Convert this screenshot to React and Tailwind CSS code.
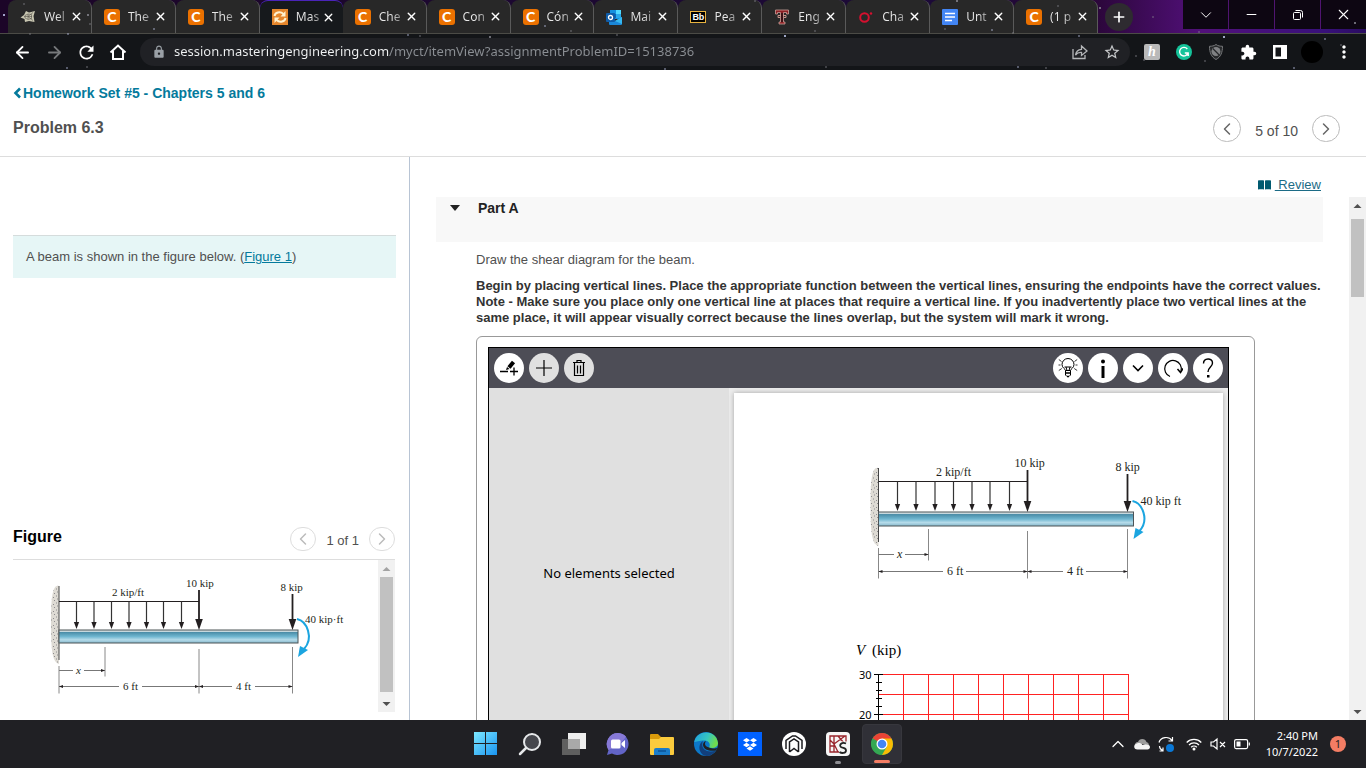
import React from 'react';
import { ArrowLeft, ArrowRight, X, Plus, Minus, ChevronDown, ChevronUp, ChevronLeft, ChevronRight } from 'lucide-react';
import { MdLock, MdRefresh, MdStarBorder, MdExtension, MdMoreVert } from 'react-icons/md';

const UI_FONT = "font-['Noto_Sans',sans-serif]";

/* ---------- favicons ---------- */

const CheggIcon = () => (
  <span className="flex h-4 w-4 flex-none items-center justify-center rounded-[3px] bg-[#eb7100] font-['Lato',sans-serif] text-[14px] leading-4 font-black text-white">C</span>
);

const WebIcon = () => (
  <svg className="h-4 w-4 flex-none" viewBox="0 0 16 16">
    <path d="M.5 8.500 4 6l2-4 3 1.500L15 2l-1.500 5 1 6L9 12l-4 1-.5-3z" fill="#c9c7b2" />
    <path d="M5 6.500l3-1.500 3.500.5v4L8 10.500 5 9zM8 5v5M4 7.500h8M8 7.500l5-4M8 7.500l5 4" stroke="#55534a" strokeWidth=".6" fill="none" />
  </svg>
);

const MasteringIcon = () => (
  <svg className="h-4 w-4 flex-none" viewBox="0 0 16 16">
    <rect width="16" height="16" fill="#e5862c" />
    <path d="M2.500 7C3 3.500 8 2 11.500 5M13.500 9C13 12.500 8 14 4.500 11" fill="none" stroke="#fff2cf" strokeWidth="2" />
    <path d="M13.500 2v5.500H8.500zM2.500 14V8.500h5z" fill="#fff2cf" />
  </svg>
);

const OutlookIcon = () => (
  <svg className="h-4 w-4 flex-none" viewBox="0 0 16 16">
    <path d="M4 1h11v9H4z" fill="#1490df" />
    <path d="M10 1h5v4h-5z" fill="#50d9ff" />
    <path d="M5 5h5v4H5z" fill="#0a64b5" />
    <path d="M10 5h5v4h-5z" fill="#28a8ea" />
    <path d="M3 8l6 4 7-4v7a1 1 0 0 1-1 1H4a1 1 0 0 1-1-1z" fill="#1a87d8" />
    <path d="M9 12l7-4v7z" fill="#35b8f1" />
    <rect y="4" width="9" height="9" rx="1" fill="#0f5ca8" />
    <circle cx="4.500" cy="8.500" r="2" fill="none" stroke="#fff" strokeWidth="1.300" />
  </svg>
);

const BlackboardIcon = () => (
  <span className="flex h-3 w-4 flex-none items-center justify-center border border-[#e8b33f] bg-black font-['Liberation_Sans',sans-serif] text-[9px] leading-3 font-bold text-white">Bb</span>
);

const TechIcon = () => (
  <svg className="h-4 w-4 flex-none" viewBox="0 0 16 16">
    <path d="M1.500 1h13v4h-2V3.500H9.500V13H11v2H5v-2h1.500V3.500h-3V5h-2z" fill="#8d1f24" stroke="#d8b0a8" strokeWidth=".7" />
    <path d="M4 6.500h8v2h-2M4 6.500v2h2" stroke="#c9958d" fill="none" />
    <path d="M7 4h2v9H7z" fill="#3c1216" />
  </svg>
);

const CharmIcon = () => (
  <svg className="h-4 w-4 flex-none" viewBox="0 0 16 16">
    <circle cx="6.500" cy="8.500" r="4.300" fill="none" stroke="#d5102f" strokeWidth="2" />
    <circle cx="13" cy="4.500" r="1.200" fill="#d5102f" />
  </svg>
);

const DocsIcon = () => (
  <svg className="h-4 w-4 flex-none" viewBox="0 0 16 16">
    <rect width="16" height="16" rx="1" fill="#4285f4" />
    <path d="M3 4.500h10M3 8h10M3 11.500h7" stroke="#fff" strokeWidth="1.600" />
  </svg>
);

const tabs = [
  { title: 'Wel', Icon: WebIcon },
  { title: 'The', Icon: CheggIcon },
  { title: 'The', Icon: CheggIcon },
  { title: 'Mas', Icon: MasteringIcon, active: true },
  { title: 'Che', Icon: CheggIcon },
  { title: 'Con', Icon: CheggIcon },
  { title: 'Cón', Icon: CheggIcon },
  { title: 'Mai', Icon: OutlookIcon },
  { title: 'Pea', Icon: BlackboardIcon },
  { title: 'Eng', Icon: TechIcon },
  { title: 'Cha', Icon: CharmIcon },
  { title: 'Unt', Icon: DocsIcon },
  { title: '(1 p', Icon: CheggIcon },
];

/* ---------- browser chrome ---------- */

const stars = [
  [4, 15], [24, 4], [90, 24], [154, 29], [148, 17], [88, 15], [67, 68], [87, 67], [420, 36], [408, 35], [490, 37],
  [571, 31], [545, 26], [617, 35], [755, 1], [785, 36], [815, 31], [826, 67], [665, 69], [945, 29], [957, 1], [992, 30],
  [1013, 33], [1058, 6], [1079, 36], [1100, 8], [1153, 17], [1018, 67], [1046, 68], [1144, 60], [1224, 37], [1199, 32],
  [1205, 61], [1325, 39], [1341, 45], [1355, 23], [1294, 68], [1136, 56], [30, 34], [68, 34],
];

const StarField = () => (
  <svg className="pointer-events-none absolute inset-0 h-full w-full" aria-hidden="true">
    {stars.map(([x, y], i) => (
      <circle key={i} cx={x} cy={y} r={i % 5 === 0 ? 1 : 0.7} fill={i % 3 === 0 ? '#cfd8ff' : '#8d8d96'} />
    ))}
  </svg>
);

const Tab = ({ title, Icon, active }) => (
  <li
    className={`flex h-full min-w-0 flex-1 items-center rounded-t-lg pr-2 pl-3 ${
      active ? 'border-t border-[#4a24b8] bg-[#16191c]' : 'border-r border-[#5a5a5a] bg-[#282828]'
    }`}
  >
    <Icon />
    <span className="ml-2 bg-[linear-gradient(90deg,#e8e8e8_60%,#8a8a8a)] bg-clip-text text-xs whitespace-nowrap text-transparent">{title}</span>
    <button className="ml-auto flex-none text-white" aria-label={`Close ${title}`}>
      <X size={13} strokeWidth={2.500} />
    </button>
  </li>
);

const WindowButton = ({ label, children }) => (
  <button aria-label={label} className="flex h-full flex-1 items-center justify-center bg-[#0d0612] text-white">{children}</button>
);

const ToolButton = ({ label, children, tone = 'text-white' }) => (
  <button aria-label={label} className={`flex h-8 w-8 flex-none items-center justify-center ${tone}`}>{children}</button>
);

const BrowserChrome = () => (
  <header className={`relative flex-none bg-[#131518] ${UI_FONT}`}>
    <div className="flex h-[34px] items-start border-b border-[#4b4b46] bg-[linear-gradient(90deg,#1c0528_0%,#1c0a38_70%,#2a0638_80%,#52107a_88%,#38107a_97%,#2a0c60_100%)] pl-2">
      <ul className="flex h-[33px] max-w-[1090px] flex-1">
        {tabs.map((tab, i) => (
          <Tab key={i} {...tab} />
        ))}
      </ul>
      <button aria-label="New tab" className="mt-[3px] ml-[7px] flex h-7 w-7 items-center justify-center rounded-full bg-[#2e2b30] text-white">
        <Plus size={16} strokeWidth={2.500} />
      </button>
      <div className="ml-auto flex h-[29px] w-[183px] gap-px bg-[#4f1470]">
        <WindowButton label="Search tabs"><ChevronDown size={18} strokeWidth={1.300} /></WindowButton>
        <WindowButton label="Minimize"><Minus size={15} strokeWidth={1.800} /></WindowButton>
        <WindowButton label="Restore">
          <svg width="12" height="12" viewBox="0 0 12 12" fill="none" stroke="currentColor">
            <rect x="1.500" y="3.500" width="7" height="7" rx="1" />
            <path d="M3.500 1.500h5a2 2 0 0 1 2 2v5" />
          </svg>
        </WindowButton>
        <WindowButton label="Close"><X size={17} strokeWidth={1.500} /></WindowButton>
      </div>
    </div>
    <div className="flex h-9 items-center px-1.5">
      <ToolButton label="Back"><ArrowLeft size={19} strokeWidth={2.300} /></ToolButton>
      <ToolButton label="Forward" tone="text-[#77797b]"><ArrowRight size={19} strokeWidth={2.300} /></ToolButton>
      <ToolButton label="Reload"><MdRefresh size={21} /></ToolButton>
      <ToolButton label="Home">
        <svg width="18" height="18" viewBox="0 0 18 18" fill="none" stroke="currentColor" strokeWidth="2">
          <path d="M1.500 9.500 9 2.500l7.500 7M4 8v8h10V8" />
        </svg>
      </ToolButton>
      <div className="ml-1.5 flex h-7 flex-1 items-center rounded-full bg-[#202125] pr-2.5 pl-3">
        <MdLock size={14} className="text-[#9aa0a6]" />
        <input
          aria-label="Address"
          defaultValue="session.masteringengineering.com/myct/itemView?assignmentProblemID=15138736"
          className="ml-2 min-w-0 flex-1 bg-[linear-gradient(90deg,#f1f3f4_215px,#8b8f94_215px)] bg-clip-text text-[13px] text-transparent outline-none"
        />
        <button aria-label="Share" className="flex w-8 justify-center text-[#b4b6b9]">
          <svg width="16" height="16" viewBox="0 0 16 16" fill="none" stroke="currentColor" strokeWidth="1.300">
            <path d="M1 5v9.500h12V11" />
            <path d="M3.500 11C4 7.500 6 5.500 9.500 5.300V2L15 7 9.500 11.500V8.500C7 8.300 5 9 3.500 11z" />
          </svg>
        </button>
        <button aria-label="Bookmark" className="-mr-2 flex w-8 justify-center text-[#c6c8ca]"><MdStarBorder size={18} /></button>
      </div>
      <div className="ml-1.5 flex">
        <ToolButton label="Honey">
          <span className="flex h-4 w-4 items-center justify-center rounded-xs bg-[#b9b9b9] font-['Liberation_Serif',serif] text-sm leading-4 font-bold text-white italic">h</span>
        </ToolButton>
        <ToolButton label="Grammarly">
          <svg width="16" height="16" viewBox="0 0 16 16">
            <circle cx="8" cy="8" r="8" fill="#15c39a" />
            <path d="M11.300 5A4.300 4.300 0 1 0 12 9H8.800M12.200 9v3" fill="none" stroke="#fff" strokeWidth="1.400" />
          </svg>
        </ToolButton>
        <ToolButton label="Ad shield">
          <svg width="16" height="16" viewBox="0 0 16 16">
            <path d="M8 .5c2 1.500 4 1.700 6.500 1.800C14.500 8 13 13 8 15.500 3 13 1.500 8 1.500 2.300 4 2.200 6 2 8 .5z" fill="#26282a" stroke="#77797b" />
            <circle cx="8" cy="7.500" r="4.500" fill="#808284" />
            <path d="M4.800 4.500l6.400 6.500" stroke="#26282a" strokeWidth="1.200" />
          </svg>
        </ToolButton>
        <ToolButton label="Extensions"><MdExtension size={17} /></ToolButton>
        <ToolButton label="Side panel">
          <svg width="14" height="14" viewBox="0 0 14 14">
            <path d="M0 0h14v14H0zM2.500 2.500v9H8v-9z" fill="#fff" fillRule="evenodd" />
          </svg>
        </ToolButton>
        <ToolButton label="Profile"><span className="h-[22px] w-[22px] rounded-full bg-black" /></ToolButton>
        <ToolButton label="Menu"><MdMoreVert size={20} /></ToolButton>
      </div>
    </div>
    <StarField />
  </header>
);

/* ---------- beam drawing ---------- */

// arrow head with its tip at x, y
const Head = ({ x, y, dir, len = 4, half = 1.5, fill = '#231f20' }) => {
  const points = {
    down: `${x},${y} ${x - half},${y - len} ${x + half},${y - len}`,
    left: `${x},${y} ${x + len},${y - half} ${x + len},${y + half}`,
    right: `${x},${y} ${x - len},${y - half} ${x - len},${y + half}`,
  };
  return <polygon points={points[dir]} fill={fill} />;
};

const Force = ({ x, top, tip }) => (
  <g>
    <path d={`M${x} ${top}V${tip - 8}`} stroke="#231f20" strokeWidth="1.800" />
    <Head x={x} y={tip} dir="down" len={11} half={3.8} />
  </g>
);

const Beam = ({ g, id }) => {
  const { wall, end, mid, tipLoad, top, beamH, loadY, loads, xMark, dimX, dimY, forceTop, lastTop } = g;
  const foot = dimY + 7;
  return (
    <g>
      <defs>
        <linearGradient id={`${id}-steel`} x1="0" y1="0" x2="0" y2="1">
          <stop offset="0" stopColor="#d5e3e8" />
          <stop offset=".13" stopColor="#c4d6dc" />
          <stop offset=".18" stopColor="#4b8da8" />
          <stop offset=".5" stopColor="#6fb6d0" />
          <stop offset=".75" stopColor="#b5dbe9" />
          <stop offset="1" stopColor="#86b8cc" />
        </linearGradient>
        <pattern id={`${id}-concrete`} width="6" height="7" patternUnits="userSpaceOnUse">
          <rect width="6" height="7" fill="#dedbd4" />
          <path d="M1 1h1M4 2.500h1M2 4h1M5 5.500h1" stroke="#8d8b8e" />
        </pattern>
      </defs>
      <path
        d={`M${wall} ${top - 44}C${wall - 6} ${top - 46} ${wall - 8} ${top - 34} ${wall - 8} ${top - 10}C${wall - 8} ${top + 20} ${wall - 7} ${top + 32} ${wall} ${top + 34}z`}
        fill={`url(#${id}-concrete)`}
      />
      <path d={`M${wall} ${top - 44}V${top + 30}`} stroke="#444" />
      <rect x={wall} y={top} width={end - wall} height={beamH} fill={`url(#${id}-steel)`} stroke="#4d5457" />
      <path d={`M${wall} ${loadY}H${mid}`} stroke="#231f20" />
      {loads.map((x) => (
        <g key={x}>
          <path d={`M${x} ${loadY}V${top - 4}`} stroke="#333" strokeWidth="1.200" />
          <Head x={x} y={top - 1} dir="down" len={7} half={2.6} />
        </g>
      ))}
      <Force x={mid} top={forceTop} tip={top} />
      <Force x={tipLoad} top={lastTop} tip={top} />
      <path
        d={`M${end - 1} ${top - 11}C${end + 9} ${top - 9} ${end + 16} ${top + 8} ${end + 6} ${top + 19}`}
        fill="none" stroke="#1ba5e0" strokeWidth="2"
      />
      <polygon points={`${end},${top + 27} ${end + 2},${top + 16} ${end + 10},${top + 20}`} fill="#1ba5e0" />
      <path
        d={`M${wall} ${top + 36}V${foot}M${xMark} ${top + 17}V${dimX + 6}M${mid} ${top + 19}V${foot}M${tipLoad} ${top + 17}V${foot}`}
        stroke="#888" fill="none"
      />
      <path
        d={`M${wall} ${dimX}H${g.xText - 3}M${g.xText + 8} ${dimX}H${xMark}M${wall} ${dimY}H${g.sixText - 4}M${g.sixText + 19} ${dimY}H${mid}M${mid} ${dimY}H${g.fourText - 4}M${g.fourText + 19} ${dimY}H${tipLoad}`}
        stroke="#777" fill="none"
      />
      <Head x={xMark} y={dimX} dir="right" />
      <Head x={wall} y={dimY} dir="left" />
      <Head x={mid} y={dimY} dir="right" />
      <Head x={mid} y={dimY} dir="left" />
      <Head x={tipLoad} y={dimY} dir="right" />
      <g className={`font-['Liberation_Serif',serif] ${g.textSize}`} fill="#231f20">
        <text x={mid - 13} y={forceTop - 3}>10 kip</text>
        <text x={tipLoad - 12} y={lastTop - 3}>8 kip</text>
        <text x={g.loadText} y={loadY - 6}>2 kip/ft</text>
        <text x={end + 7} y={top - 7}>{g.moment}</text>
        <text x={g.xText} y={dimX + 3} fontStyle="italic">x</text>
        <text x={g.sixText} y={dimY + 3}>6 ft</text>
        <text x={g.fourText} y={dimY + 3}>4 ft</text>
      </g>
    </g>
  );
};

const figureGeometry = {
  wall: 46, end: 285, mid: 186, tipLoad: 279.5, top: 70, beamH: 13, loadY: 41.5,
  loads: [63.5, 81, 98.5, 116, 133.5, 150.5, 168.5],
  xMark: 92, dimX: 110.5, dimY: 126.5, forceTop: 30, lastTop: 34,
  loadText: 99, xText: 63, sixText: 110, fourText: 223, moment: '40 kip·ft', textSize: 'text-[11px]',
};

const canvasGeometry = {
  wall: 144.5, end: 399.5, mid: 293.5, tipLoad: 393.5, top: 119, beamH: 14, loadY: 88.5,
  loads: [163.5, 182, 201, 219.5, 238, 256, 275.5],
  xMark: 194.5, dimX: 161.5, dimY: 178.5, forceTop: 77, lastTop: 81,
  loadText: 202, xText: 163, sixText: 213, fourText: 333, moment: '40 kip ft', textSize: 'text-[12px]',
};

const ShearGraph = () => {
  const columns = [169.5, 194.5, 219.5, 244.5, 269.5, 294.5, 319.5, 344.5, 369.5, 394.5];
  return (
    <g>
      <g className="font-['Liberation_Serif',serif] text-[15px]">
        <text x="122" y="262" fontStyle="italic">V</text>
        <text x="138" y="262">(kip)</text>
      </g>
      {[281.5, 301.5, 321.5].map((y) => (
        <path key={y} d={`M144 ${y}H395`} stroke="#f22" fill="none" />
      ))}
      {columns.map((x) => (
        <path key={x} d={`M${x} 281V340`} stroke="#f22" fill="none" />
      ))}
      <path d="M144.500 281V340M140 281.500h9M142 289.500h6M142 297.500h6M142 305.500h6M142 313.500h6M140 321.500h9" stroke="#000" />
      <g className="font-['Noto_Sans',sans-serif] text-[11px]">
        <text x="125" y="286">30</text>
        <text x="125" y="326">20</text>
      </g>
    </g>
  );
};

/* ---------- page ---------- */

const PagerButton = ({ label, muted, children }) => (
  <button
    aria-label={label}
    className={`flex items-center justify-center rounded-full border ${
      muted ? 'h-6 w-[26px] border-[#ddd] text-[#bbb]' : 'h-[27px] w-7 border-[#bbb] text-[#666]'
    }`}
  >
    {children}
  </button>
);

const Scrollbar = ({ thumb, faded }) => (
  <div className="flex w-[17px] flex-none flex-col items-center bg-[#f1f1f1]" aria-hidden="true">
    <svg className="h-[17px] w-[17px] flex-none" viewBox="0 0 17 17"><path d="M4.500 11h8l-4-4z" fill={faded ? '#a3a3a3' : '#505050'} /></svg>
    <div className={`w-[13px] bg-[#c1c1c1] ${thumb}`} />
    <svg className="mt-auto h-[17px] w-[17px] flex-none" viewBox="0 0 17 17"><path d="M4.500 7h8l-4 4z" fill="#505050" /></svg>
  </div>
);

const PageHeader = () => (
  <div className="flex flex-none items-end justify-between border-b border-[#ddd] pt-3.5 pr-[26px] pb-3.5 pl-[13px]">
    <div>
      <a href="#homework" className="flex items-center text-sm leading-[18px] font-bold text-[#047a9c]">
        <svg className="mr-0.5 h-3 w-2" viewBox="0 0 8 12" fill="none" stroke="currentColor" strokeWidth="2.600"><path d="M7 1.500 2.500 6 7 10.500" /></svg>
        Homework Set #5 - Chapters 5 and 6
      </a>
      <h1 className="mt-4 mb-1 text-base leading-5 font-bold text-[#505050]">Problem 6.3</h1>
    </div>
    <nav className="flex items-center gap-3.5">
      <PagerButton label="Previous item"><ChevronLeft size={20} strokeWidth={1.800} /></PagerButton>
      <span className="mt-1 text-sm leading-5 text-[#505050]">5 of 10</span>
      <PagerButton label="Next item"><ChevronRight size={20} strokeWidth={1.800} /></PagerButton>
    </nav>
  </div>
);

const LeftPane = () => (
  <aside className="flex w-[410px] flex-none flex-col border-r border-[#b8c4d4] pt-[78px] pb-2 pl-[13px]">
    <p className="mr-[13px] border-t border-[#d5dcdc] bg-[#e6f6f6] px-[13px] py-[13px] text-[13px] leading-4 text-[#505050]">
      A beam is shown in the figure below. (<a href="#figure" className="text-[#047a9c] underline">Figure 1</a>)
    </p>
    <section id="figure" className="mt-auto mr-3.5">
      <div className="flex items-center justify-between border-b border-[#ddd] pb-2">
        <h2 className="pb-1 text-base leading-5 font-bold text-black">Figure</h2>
        <div className="flex items-center gap-2.5">
          <PagerButton label="Previous figure" muted><ChevronLeft size={20} strokeWidth={1.800} /></PagerButton>
          <span className="pt-1 text-[13px] leading-5 text-[#505050]">1 of 1</span>
          <PagerButton label="Next figure" muted><ChevronRight size={20} strokeWidth={1.800} /></PagerButton>
        </div>
      </div>
      <div className="flex h-[152px]">
        <svg className="h-full min-w-0 flex-1" role="img" aria-label="Cantilever beam with loads">
          <Beam g={figureGeometry} id="figure" />
        </svg>
        <Scrollbar thumb="h-[115px]" faded />
      </div>
    </section>
  </aside>
);

const RoundButton = ({ label, disabled, children }) => (
  <button
    aria-label={label}
    disabled={disabled}
    className={`flex h-[30px] w-[30px] items-center justify-center rounded-full text-black ${disabled ? 'bg-[#e0e0e0]' : 'bg-white'}`}
  >
    <svg width="20" height="20" viewBox="0 0 20 20" fill="none" stroke="currentColor">{children}</svg>
  </button>
);

const DrawingTool = () => (
  <div className="flex min-h-[420px] flex-col border border-black">
    <div className="flex h-10 flex-none items-center justify-between bg-[#4d4d56] px-[5px]">
      <div className="flex gap-[5px]">
        <RoundButton label="Add line">
          <path d="M1 13.500h8M11 13.500h8M15 9.500v8" strokeWidth="1.300" />
          <path d="M10 9.500l4.500-5.500" strokeWidth="4" />
          <path d="M7 12l1-3 2.500 2z" fill="currentColor" stroke="none" />
        </RoundButton>
        <RoundButton label="Add element" disabled><path d="M10 2v16M2 10h16" strokeWidth="1.200" /></RoundButton>
        <RoundButton label="Delete" disabled>
          <path d="M4 4.500h12M8 4.500v-2h4v2M5.500 5v12.500h9V5M8.500 7.500v8M11.500 7.500v8" strokeWidth="1.200" />
        </RoundButton>
      </div>
      <div className="flex gap-[5px]">
        <RoundButton label="Hint">
          <path d="M7.500 12.500C7.500 11 4 10 4 6.500a6 6 0 0 1 12 0C16 10 12.500 11 12.500 12.500zM8 9l1 3.500M12 9l-1 3.500M6.500 9h7M7.500 12.500v4.500l1.500 1.500h2l1.500-1.500v-4.500" />
          <path d="M7.500 15h5M9 18.500h2" strokeWidth="1.500" />
          <path d="M.8 1.500 3.500 3.500M19.200 1.500 16.500 3.500M.8 12.500l3-2M19.200 12.500l-3-2M.5 7h2M17.500 7h2" strokeWidth=".8" />
        </RoundButton>
        <RoundButton label="Info">
          <path d="M10 8v12" strokeWidth="3" />
          <circle cx="10" cy="3.500" r="2" fill="currentColor" stroke="none" />
        </RoundButton>
        <RoundButton label="More"><path d="M5 7.500 10 12.500l5-5" strokeWidth="1.600" /></RoundButton>
        <RoundButton label="Reset">
          <path d="M7 18.500A8.300 8.300 0 1 1 18 13" strokeWidth="1.200" />
          <path d="M14.500 11l3 3.500 2.500-4" strokeWidth="1.500" />
        </RoundButton>
        <RoundButton label="Help">
          <path d="M5.500 5.500C5.500-.5 14.500-.5 14.500 5c0 4-4.500 4-4.500 9" strokeWidth="1.400" />
          <rect x="9" y="17" width="2.500" height="2.500" fill="currentColor" stroke="none" />
        </RoundButton>
      </div>
    </div>
    <div className="flex flex-1">
      <div className={`flex w-60 flex-none justify-center bg-[#e0e0e0] pt-[173px] text-[13px] leading-6 text-black ${UI_FONT}`}>No elements selected</div>
      <div className="flex flex-1 bg-[#ececec] pt-[5px] pr-[5px] pl-[5px]">
        <div className="flex-1 bg-white shadow-[0_0_5px_rgba(0,0,0,0.3)]">
          <svg className="h-[340px] w-full" role="img" aria-label="Shear diagram canvas">
            <Beam g={canvasGeometry} id="canvas" />
            <ShearGraph />
          </svg>
        </div>
      </div>
    </div>
  </div>
);

const RightPane = () => (
  <main className="flex min-w-0 flex-1 flex-col">
    <div className="flex h-10 flex-none items-end justify-end pr-[45px] pb-1">
      <a href="#review" className="flex items-center text-[13px] leading-4 text-[#1c6b86]">
        <svg className="mr-1 h-2.5 w-[13px]" viewBox="0 0 13 10">
          <path d="M0 .5C2 0 4.500 0 6 .5V9.500C4.500 9 2 9 0 9.500zM7 .5C8.500 0 11 0 13 .5v9c-2-.5-4.500-.5-6 0z" fill="#005a70" />
        </svg>
        <span className="whitespace-pre underline"> Review</span>
      </a>
    </div>
    <div className="flex min-h-0 flex-1">
      <div className="min-w-0 flex-1 overflow-hidden pr-[26px] pl-[26px]">
        <button className="flex h-[45px] w-full items-start gap-[18px] bg-[#f8f8f8] pt-[3px] pl-3.5 text-left text-sm leading-4 font-bold text-[#222]">
          <svg className="mt-1 h-2 w-2.5" viewBox="0 0 10 8"><path d="M0 1h10L5 7z" fill="#222" /></svg>
          <span>Part A</span>
        </button>
        <div className="pt-2.5 pl-10 text-[13px] leading-4 text-[#505050]">
          <p>Draw the shear diagram for the beam.</p>
          <p className="mt-2.5 font-bold text-[#333]">
            Begin by placing vertical lines. Place the appropriate function between the vertical lines, ensuring the endpoints have the correct values.
            <br />
            Note - Make sure you place only one vertical line at places that require a vertical line. If you inadvertently place two vertical lines at the same place, it will appear visually correct because the lines overlap, but the system will mark it wrong.
          </p>
          <div className="mt-2.5 mr-[68px] rounded-md border border-[#999] pt-2.5 pr-[25px] pl-[11px]">
            <DrawingTool />
          </div>
        </div>
      </div>
      <Scrollbar thumb="mt-[5px] h-[78px]" />
    </div>
  </main>
);

/* ---------- taskbar ---------- */

const apps = [
  {
    name: 'Start',
    art: (
      <g>
        <defs>
          <linearGradient id="win" gradientUnits="userSpaceOnUse" x1="0" y1="0" x2="24" y2="24"><stop stopColor="#7ce8ff" /><stop offset="1" stopColor="#1590f0" /></linearGradient>
        </defs>
        <path d="M0 0h11v11H0zM12 0h11v11H12zM0 12h11v11H0zM12 12h11v11H12z" fill="url(#win)" />
      </g>
    ),
  },
  {
    name: 'Search',
    art: (
      <g fill="none" stroke="#e6e8ea" strokeWidth="2" strokeLinecap="round">
        <circle cx="14" cy="10" r="8" fill="#45464c" />
        <path d="M8 16l-6 6" strokeWidth="2.500" />
      </g>
    ),
  },
  {
    name: 'Task view',
    art: (
      <g>
        <path d="M6 1h18v16H6z" fill="#eee" />
        <path d="M0 7h18v16H0z" fill="#5f5f5f" />
        <path d="M6 7h12v10H6z" fill="#a9a9a9" />
      </g>
    ),
  },
  {
    name: 'Chat',
    art: (
      <g>
        <path d="M12 1a11 11 0 1 1-6 20.500L1 23l1.500-5A11.200 11.200 0 0 1 12 1z" fill="#6264c7" />
        <path d="M12 1a11 11 0 0 0-9.500 17C8 16 17 10 20 4.500A11 11 0 0 0 12 1z" fill="#8779d6" />
        <rect x="5" y="7.500" width="9.500" height="9" rx="1.500" fill="#fff" />
        <path d="M15.500 11l3.500-3v8l-3.500-3z" fill="#fff" />
      </g>
    ),
  },
  {
    name: 'File Explorer',
    art: (
      <g>
        <path d="M0 3a1 1 0 0 1 1-1h7l3 3h9v5H0z" fill="#d99a0b" />
        <path d="M0 7h9l2-2h12a1 1 0 0 1 1 1v16a1 1 0 0 1-1 1H1a1 1 0 0 1-1-1z" fill="#fbcb3d" />
        <path d="M4 23v-5a2 2 0 0 1 2-2h12a2 2 0 0 1 2 2v5z" fill="#1a7cc9" />
        <path d="M8 19h8" stroke="#0b5294" strokeWidth="1.500" />
      </g>
    ),
  },
  {
    name: 'Edge',
    art: (
      <g>
        <defs>
          <linearGradient id="edge-top" x1="0" y1="0" x2="1" y2=".3"><stop stopColor="#1f9fe0" /><stop offset=".6" stopColor="#36c6c0" /><stop offset="1" stopColor="#6fdc4e" /></linearGradient>
        </defs>
        <circle cx="12" cy="12" r="12" fill="#0c78c9" />
        <path d="M.3 10C2-2 22-3.500 24 11c.3 4-4 6-9 4.500 2-3 0-7-4.500-7C5 8.500 2 10 .3 10z" fill="url(#edge-top)" />
        <path d="M9 9c-3 7 3 13 13 9.500C19 23 14 25 10 23.500 4 20 4 12 9 9z" fill="#123f7c" />
        <path d="M15 15.500c-4-1-5-3.500-3-6.500-4 1-4 6 0 8.500 3 1.500 7 1.500 10 1l1.500-2.500c-2 .8-6 .500-8.500-.5z" fill="#202124" />
      </g>
    ),
  },
  {
    name: 'Dropbox',
    art: (
      <g>
        <path d="M0 0h24v24H0z" fill="#0061fe" />
        <path d="M8.500 6l3.500 2.300-3.500 2.300L5 8.300zM15.500 6 19 8.300l-3.500 2.300L12 8.300zM8.500 10.700l3.500 2.300-3.500 2.300L5 13zM15.500 10.700 19 13l-3.500 2.300L12 13zM12 14.300l3.500 2.200-3.500 2.200-3.500-2.200z" fill="#fff" />
      </g>
    ),
  },
  {
    name: 'Bridge',
    art: (
      <g>
        <circle cx="12" cy="12" r="12" fill="#fff" />
        <path d="M4 17V8.500L10.500 4h3L20 8.500V17M7.500 20V10L12 7l4.500 3v10M7.500 20l4.500-3.500 4.500 3.500" fill="none" stroke="#1b1b1f" strokeWidth="1.500" />
      </g>
    ),
  },
  {
    name: 'Kinematics Solver',
    running: true,
    art: (
      <g fill="none">
        <rect width="24" height="24" rx="4" fill="#f6f6f6" />
        <path d="M4 4h16v16H4zM8 4v16M4 8l4 4M8 12l11-8M8 12l4 8M12 4l6 7M4 14h5" stroke="#98242b" strokeWidth="1.300" />
        <path d="M13 9.500h9V22h-9z" fill="#f6f6f6" />
        <path d="M20 11.500C16 9.500 12.500 13 15 15c2 1.500 5 .5 5 3.500S15.500 21.500 13.500 20" stroke="#222" strokeWidth="1.800" />
      </g>
    ),
  },
  {
    name: 'Chrome',
    active: true,
    art: (
      <g>
        <circle cx="12" cy="12" r="11" fill="#34a853" />
        <path d="M12 12 2.500 6.500a11 11 0 0 1 19 0z" fill="#ea4335" />
        <path d="M12 12V6.500h9.500A11 11 0 0 1 12 23z" fill="#fbbc04" />
        <path d="M12 12 2.500 6.500C-1 13 3 22.500 12 23l4.800-8.300z" fill="#34a853" />
        <circle cx="12" cy="12" r="5.500" fill="#fff" />
        <circle cx="12" cy="12" r="4.300" fill="#4285f4" />
      </g>
    ),
  },
];

const TaskButton = ({ app }) => (
  <button
    aria-label={app.name}
    className={`relative flex h-10 w-10 items-center justify-center rounded ${app.active ? 'border border-[#37373d] bg-[#303037]' : ''}`}
  >
    <svg width="24" height="24" viewBox="0 0 24 24">{app.art}</svg>
    {app.active && <span className="absolute bottom-0 h-[3px] w-4 rounded-full bg-[#f47d64]" />}
    {app.running && <span className="absolute bottom-0 h-[3px] w-1.5 rounded-full bg-[#8f8f94]" />}
  </button>
);

const Taskbar = () => (
  <footer className={`grid h-12 flex-none grid-cols-[1fr_auto_1fr] items-center bg-[#202024] text-white ${UI_FONT}`}>
    <div />
    <div className="flex gap-1 pl-0.5">
      {apps.map((app) => (
        <TaskButton key={app.name} app={app} />
      ))}
    </div>
    <div className="flex items-center justify-end pr-5">
      <button aria-label="Hidden icons" className="mr-1.5"><ChevronUp size={20} strokeWidth={1.500} /></button>
      <svg className="mr-2 h-4 w-4" viewBox="0 0 16 16">
        <path d="M4 6a4.500 4.500 0 0 1 8.500 0A3.500 3.500 0 0 1 15 9L8 8 1 11C0 8 2 6 4 6z" fill="#9c9c9c" />
        <path d="M3 7.500C5 6.500 7 7 8.500 9 11 7.500 16 8 16 11c0 1.500-1 2.500-2.500 2.500h-10C-.8 13.500-.8 8.500 3 7.500z" fill="#f4f4f4" />
      </svg>
      <svg className="mr-3 h-4 w-4" viewBox="0 0 16 16" fill="none" stroke="#fff" strokeWidth="1.200">
        <path d="M1 6.500C2.500.5 11 0 14 4.500M14.500 1v4H10.500M4.500 14.500C2.500 13.500 1.500 12 1.500 10M1.500 15h3.500v-3.500" />
        <circle cx="12" cy="12" r="4" fill="#0a78d6" stroke="none" />
      </svg>
      <svg className="mr-2 h-4 w-4" viewBox="0 0 16 16" fill="none" stroke="#fff" strokeWidth="1.300">
        <path d="M.7 6.500a10.300 10.300 0 0 1 14.600 0M3 9a7 7 0 0 1 10 0M5.200 11.300a4 4 0 0 1 5.600 0" />
        <circle cx="8" cy="13" r="1.500" fill="#fff" stroke="none" />
      </svg>
      <svg className="mr-2 h-4 w-4" viewBox="0 0 16 16" fill="none" stroke="#fff" strokeWidth="1.200">
        <path d="M1 6h2.500L7 3v10L3.500 10H1zM10 6l5 5M15 6l-5 5" />
      </svg>
      <svg className="mr-4 h-4 w-4" viewBox="0 0 16 16" fill="none" stroke="#fff" strokeWidth="1.200">
        <rect x=".6" y="3.600" width="13" height="9" rx="1.500" />
        <path d="M15.300 6.500v3" />
        <path d="M2.500 5.500h4v5h-4z" fill="#fff" stroke="none" />
      </svg>
      <div className="text-right text-[11px] leading-4">
        <div>2:40 PM</div>
        <div>10/7/2022</div>
      </div>
      <span className="ml-3 flex h-4 w-4 items-center justify-center rounded-full bg-[#f47d64] text-[11px] leading-4 text-[#222]">1</span>
    </div>
  </footer>
);

export default function App() {
  return (
    <div className="flex h-screen flex-col overflow-hidden bg-white font-['Liberation_Sans',Arial,sans-serif]">
      <BrowserChrome />
      <PageHeader />
      <div className="flex min-h-0 flex-1">
        <LeftPane />
        <RightPane />
      </div>
      <Taskbar />
    </div>
  );
}
